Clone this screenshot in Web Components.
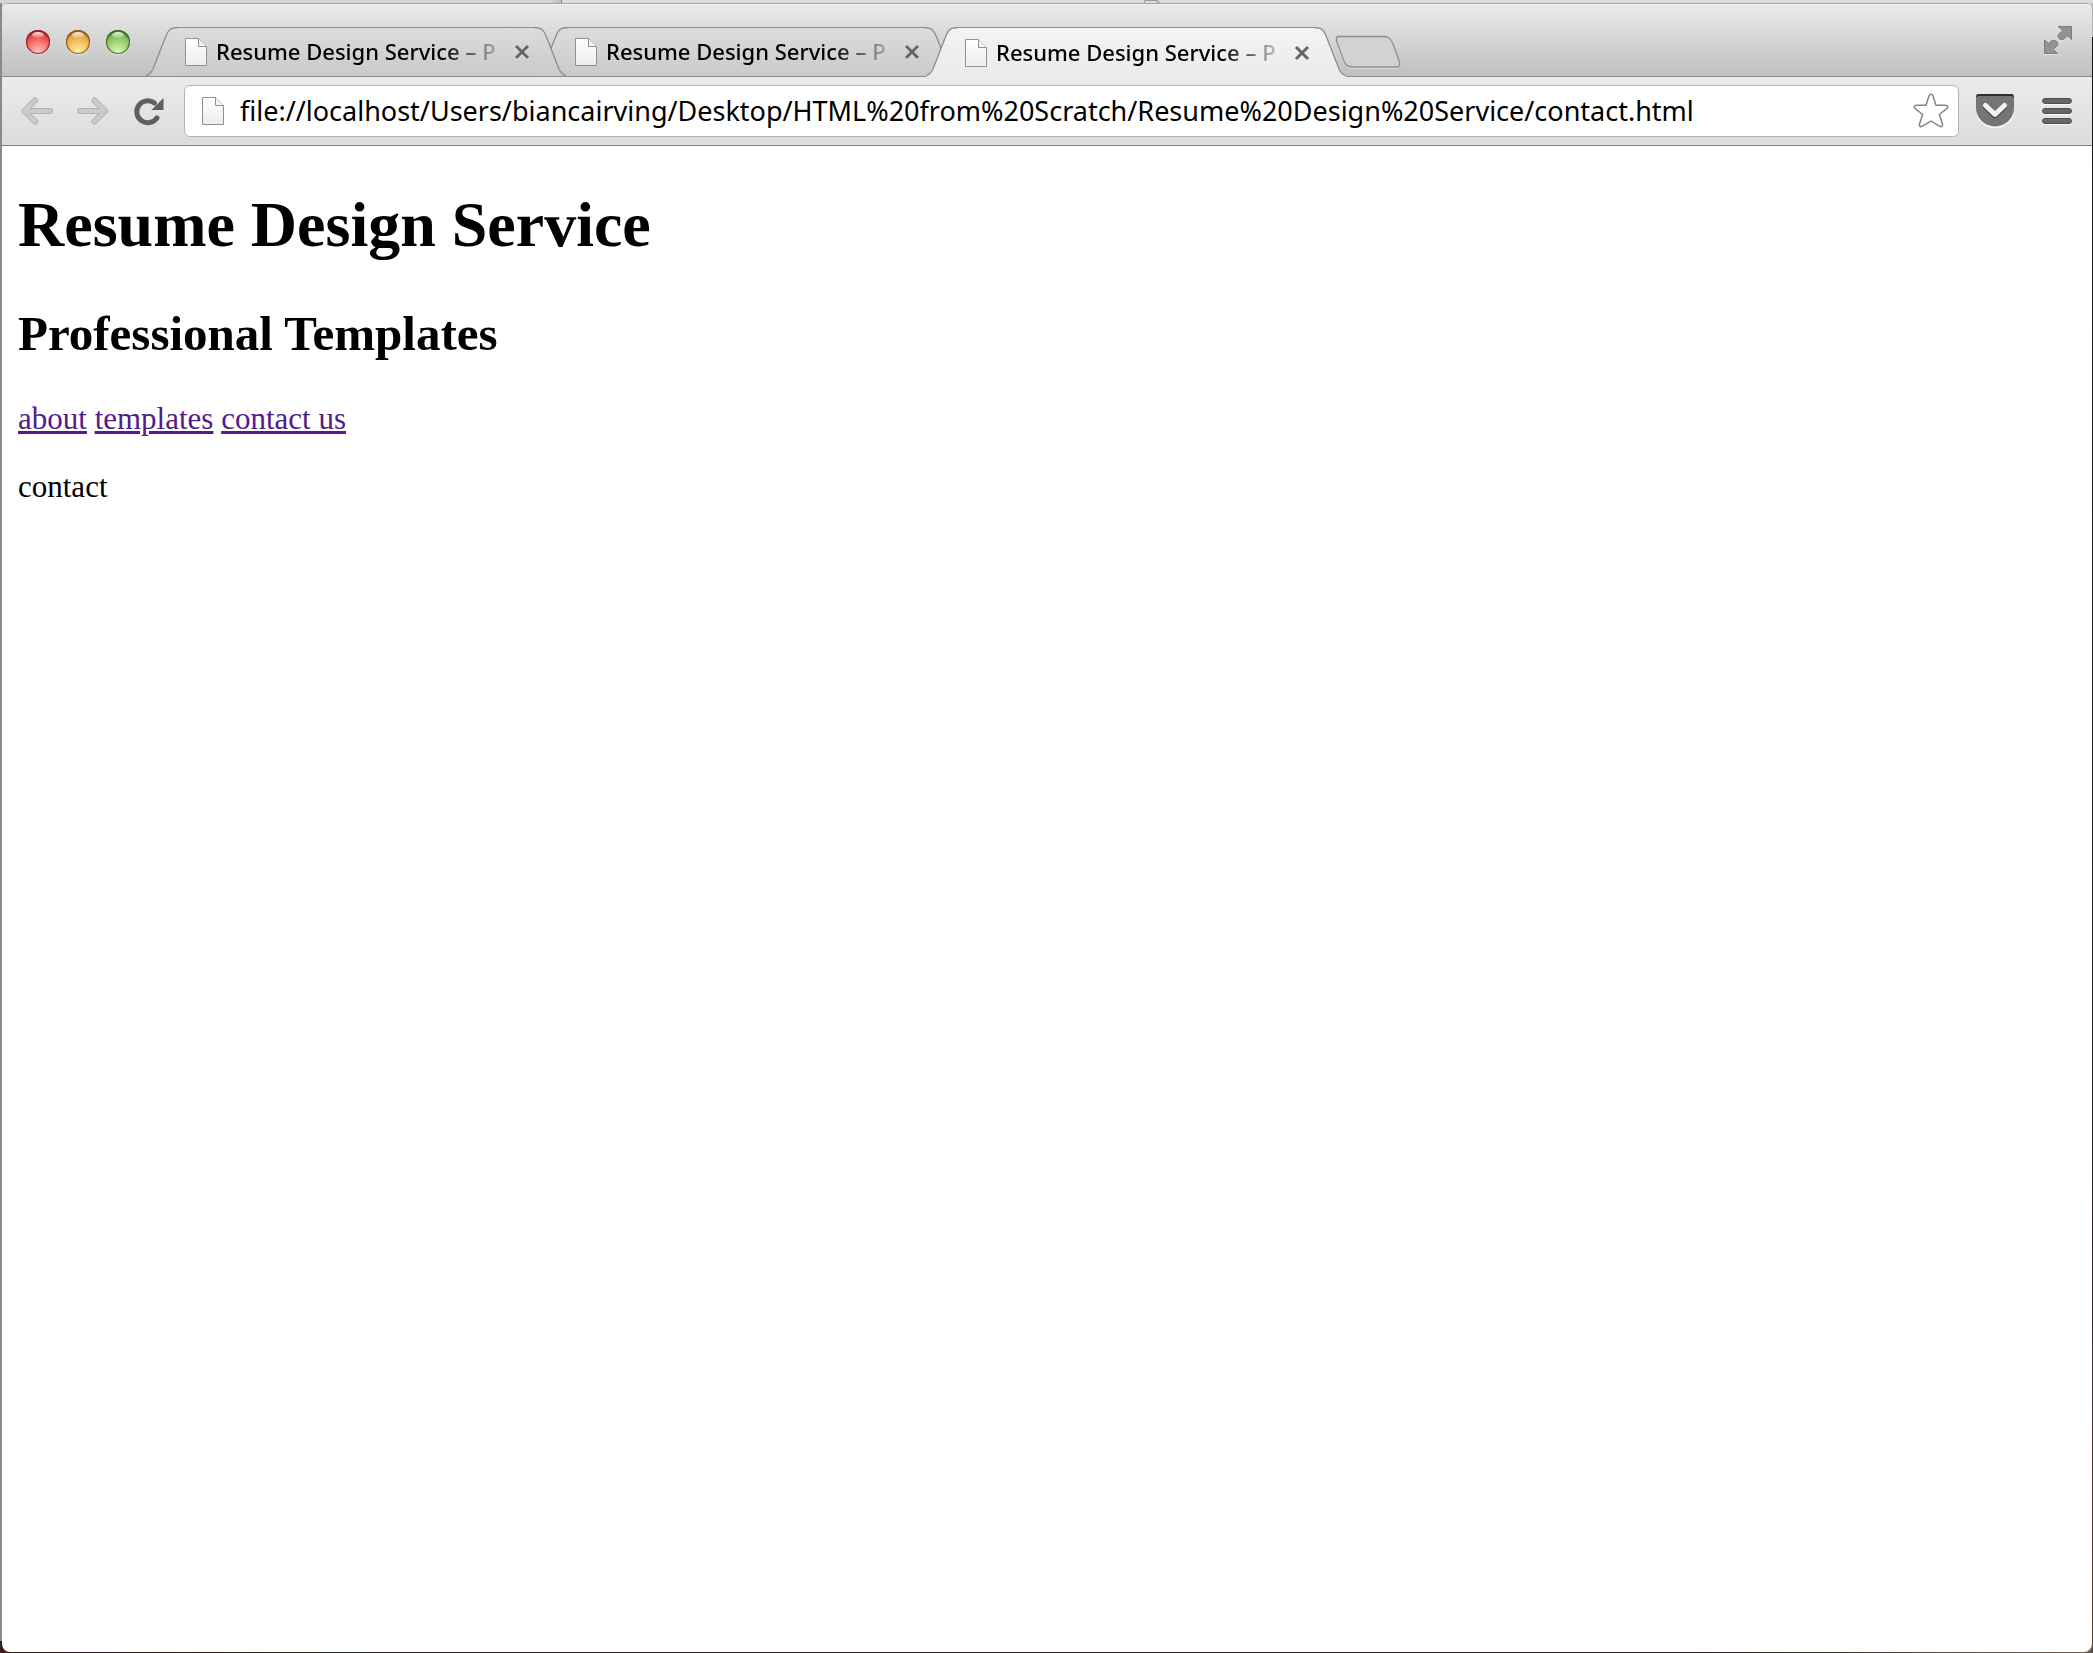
<!DOCTYPE html>
<html lang="en">
<head>
<meta charset="utf-8">
<title>Resume Design Service – Professional Templates</title>
<style>
    html {
        height: 100%;
    }

    body {
        margin: 0;
        min-height: 100%;
        display: flex;
        font-family: "Noto Sans", sans-serif;
        background: #3a2320;
    }
</style>
</head>
<body>
<browser-window>
    <tab-strip slot="tabs">
        <browser-tab style="z-index: 2">Resume Design Service – P</browser-tab>
        <browser-tab style="z-index: 1">Resume Design Service – P</browser-tab>
        <browser-tab active style="z-index: 3">Resume Design Service – P</browser-tab>
    </tab-strip>
    <browser-toolbar slot="toolbar" url="file://localhost/Users/biancairving/Desktop/HTML%20from%20Scratch/Resume%20Design%20Service/contact.html"></browser-toolbar>
    <contact-page></contact-page>
</browser-window>

<script>
// Shared base: clones a template string into an open shadow root
class BaseElement extends HTMLElement {
    constructor() {
        super();
        const template = document.createElement('template');
        template.innerHTML = this.constructor.markup;
        this.attachShadow({ mode: 'open' });
        this.shadowRoot.appendChild(template.content.cloneNode(true));
    }
}

class DocIcon extends BaseElement {
    static markup = `
        <style>
            :host {
                display: block;
                flex: none;
                width: 22px;
                height: 30px;
            }

            svg {
                display: block;
            }
        </style>
        <svg width="22" height="30" viewBox="0 0 22 30" aria-hidden="true">
            <defs>
                <linearGradient id="paper" x1="0" y1="0" x2="0" y2="1">
                    <stop offset="0" stop-color="#fff"/>
                    <stop offset="1" stop-color="#ededed"/>
                </linearGradient>
            </defs>
            <path d="M.5 1.5H13.5L21.5 9.500V28.500H.5Z" fill="url(#paper)" stroke="#909090"/>
            <path d="M13.5 1.500V9.500H21.500" fill="#f4f4f4" stroke="#909090"/>
        </svg>
    `;
}

class TrafficLights extends BaseElement {
    static markup = `
        <style>
            :host {
                display: flex;
                gap: 16px;
            }

            button {
                position: relative;
                width: 24px;
                height: 24px;
                padding: 0;
                border: 0;
                border-radius: 50%;
                background: radial-gradient(circle at 50% 95%, var(--glow) 0, var(--base) 65%, var(--edge) 100%);
                box-shadow: inset 0 0 1px 1px var(--edge), inset 0 2px 2px var(--edge), 0 1px 1px hsla(0 0% 100% / 0.5);
            }

            button::after {
                content: "";
                position: absolute;
                top: 2px;
                left: 6px;
                width: 12px;
                height: 6px;
                border-radius: 50%;
                background: linear-gradient(hsla(0 0% 100% / 0.9), hsla(0 0% 100% / 0.1));
            }

            .close { --base: #f04b4b; --glow: #ffc9c4; --edge: #92242a; }
            .minimise { --base: #eba945; --glow: #fff6a0; --edge: #8e5a1e; }
            .zoom { --base: #83bf5c; --glow: #e4fbb8; --edge: #3d6f2c; }
        </style>
        <button class="close" aria-label="Close"></button>
        <button class="minimise" aria-label="Minimise"></button>
        <button class="zoom" aria-label="Zoom"></button>
    `;
}

class BrowserTab extends BaseElement {
    static markup = `
        <style>
            :host {
                --top: #dcdcdd;
                --bottom: #cacacb;
                --line: #8d8d8d;
                position: relative;
                display: flex;
                flex: 0 1 420px;
                min-width: 0;
                height: 49px;
                margin-right: -30px;
            }

            :host([active]) {
                --top: #f3f3f3;
                --bottom: #ebebeb;
                height: 50px;
                margin-bottom: -1px;
            }

            svg {
                display: block;
                flex: none;
            }

            .edge {
                width: 32px;
                height: 100%;
            }

            .edge stop:first-child { stop-color: var(--top); }
            .edge stop:last-child { stop-color: var(--bottom); }
            .edge .line { fill: none; stroke: var(--line); stroke-width: 1.3; }

            .body {
                flex: 1;
                min-width: 0;
                display: flex;
                align-items: center;
                gap: 9px;
                padding-left: 7px;
                border-top: 1px solid var(--line);
                background: linear-gradient(var(--top), var(--bottom));
            }

            .title {
                flex: 1;
                overflow: hidden;
                white-space: nowrap;
                color: #000;
                padding-bottom: 2px;
                font-size: 22px;
                font-weight: 500;
                line-height: 30px;
                mask-image: linear-gradient(to right, black calc(100% - 60px), transparent calc(100% + 10px));
            }

            button {
                display: flex;
                padding: 0;
                border: 0;
                background: none;
            }
        </style>
        <svg class="edge" viewBox="0 0 32 50" preserveAspectRatio="xMidYMin slice" aria-hidden="true">
            <defs>
                <linearGradient id="l" x1="0" y1="0" x2="0" y2="1"><stop offset="0"/><stop offset="1"/></linearGradient>
            </defs>
            <path d="M0 50V48.500C4 48 5.500 45 7 42L19.500 10C22 3.500 24 .5 32 .5V50Z" fill="url(#l)"/>
            <path class="line" d="M0 48.500C4 48 5.500 45 7 42L19.500 10C22 3.500 24 .5 32 .5"/>
        </svg>
        <div class="body">
            <doc-icon></doc-icon>
            <div class="title"><slot></slot></div>
            <button aria-label="Close tab">
                <svg width="24" height="24" viewBox="0 0 24 24" aria-hidden="true">
                    <path d="M6 7L18 19M18 7L6 19" stroke="#fff" stroke-opacity=".6" stroke-width="3"/>
                    <path d="M6 6L18 18M18 6L6 18" stroke="#666" stroke-width="3"/>
                </svg>
            </button>
        </div>
        <svg class="edge" viewBox="0 0 32 50" preserveAspectRatio="xMidYMin slice" aria-hidden="true">
            <defs>
                <linearGradient id="r" x1="0" y1="0" x2="0" y2="1"><stop offset="0"/><stop offset="1"/></linearGradient>
            </defs>
            <path d="M32 50V48.500C28 48 26.500 45 25 42L12.500 10C10 3.500 8 .5 0 .5V50Z" fill="url(#r)"/>
            <path class="line" d="M32 48.500C28 48 26.500 45 25 42L12.500 10C10 3.500 8 .5 0 .5"/>
        </svg>
    `;
}

class TabStrip extends BaseElement {
    static markup = `
        <style>
            :host {
                display: flex;
                align-items: flex-end;
                height: 72px;
                padding: 0 19px 0 24px;
                border-bottom: 1px solid #8a8a8a;
                background: linear-gradient(#eaeaea, #c0c0c0);
                box-shadow: inset 0 1px #f4f4f4;
            }

            traffic-lights {
                align-self: center;
                padding-top: 4px;
            }

            .tabs {
                flex: 1;
                min-width: 0;
                display: flex;
                align-items: flex-end;
                padding-left: 16px;
            }

            .new, .full {
                display: flex;
                padding: 0;
                border: 0;
                background: none;
            }

            .new {
                margin: 0 0 7px 19px;
            }

            .full {
                align-self: center;
            }
        </style>
        <traffic-lights></traffic-lights>
        <div class="tabs">
            <slot></slot>
            <button class="new" aria-label="New tab">
                <svg width="66" height="34" viewBox="0 0 66 34" aria-hidden="true">
                    <path d="M4 2.500H49C54 2.500 56 5 58 10L64.500 28C65 31 64.500 33 62 33H18C12 33 10.500 31 8.500 26L1.500 7C1 4 1.500 2.500 4 2.500Z" fill="none" stroke="#efefef"/>
                    <path d="M4 1.500H49C54 1.500 56 4 58 9L64.500 27C65 30 64.500 32 62 32H18C12 32 10.500 30 8.500 25L1.500 6C1 3 1.500 1.500 4 1.500Z" fill="#d2d2d2" stroke="#8e8e8e" stroke-width="1.3"/>
                </svg>
            </button>
        </div>
        <button class="full" aria-label="Enter full screen">
            <svg width="30" height="30" viewBox="0 0 30 30" aria-hidden="true">
                <g fill="#fff" opacity=".5" transform="translate(0 1)">
                    <path d="M14.500 1H29V15.500L24.500 11.500L20.500 15C17 16.500 13.500 13 15.500 9.500L19 5.500Z"/>
                    <path d="M1 14.500L5.500 18.500L9 15.500C13 13.500 16 17 14.500 20.500L11 24.500L15.500 29H1Z"/>
                </g>
                <g fill="#939393" stroke="#7c7c7c">
                    <path d="M15 1.500H28.500V14.500L24.500 11L20.500 14.500C17 15.500 14 13 15.500 9.500L19.500 5.500Z"/>
                    <path d="M1.500 15L5.500 18.500L9 15.500C13 14.500 15.500 17 14.500 20.500L10.500 24.500L14.500 28.500H1.500Z"/>
                </g>
            </svg>
        </button>
    `;
}

class BrowserToolbar extends BaseElement {
    static markup = `
        <style>
            :host {
                display: flex;
                align-items: center;
                height: 68px;
                padding: 0 17px 0 18px;
                border-bottom: 1px solid #7f7f7f;
                background: linear-gradient(#ebebeb, #dcdcdc);
            }

            button {
                display: flex;
                flex: none;
                padding: 0;
                border: 0;
                background: none;
            }

            .nav {
                display: flex;
                gap: 20px;
                width: 164px;
            }

            form {
                flex: 1;
                min-width: 0;
                display: flex;
                align-items: center;
                gap: 16px;
                height: 50px;
                padding: 0 7px 0 17px;
                border: 1px solid #b4b4b4;
                border-radius: 6px;
                background: #fff;
            }

            input {
                flex: 1;
                min-width: 0;
                height: 38px;
                padding: 0 0 2px;
                border: 0;
                outline: 0;
                background: none;
                color: #000;
                font-family: "Noto Sans", sans-serif;
                font-size: 27px;
            }

            form button {
                margin-left: -16px;
            }

            .tools {
                display: flex;
                gap: 24px;
                padding-left: 16px;
            }
        </style>
        <div class="nav">
            <button aria-label="Back">
                <svg width="36" height="32" viewBox="0 0 36 32" aria-hidden="true">
                    <g fill="none" stroke-linecap="round" stroke-linejoin="round">
                        <path d="M15 5.500L4.500 16L15 26.500M5 16H30" stroke="#b2b2b2" stroke-width="6"/>
                        <path d="M15 5.500L4.500 16L15 26.500M5 16H30" stroke="#cbcbcb" stroke-width="4"/>
                    </g>
                </svg>
            </button>
            <button aria-label="Forward">
                <svg width="36" height="32" viewBox="0 0 36 32" aria-hidden="true">
                    <g fill="none" stroke-linecap="round" stroke-linejoin="round">
                        <path d="M18.500 5.500L29 16L18.500 26.500M4 16H28.500" stroke="#b2b2b2" stroke-width="6"/>
                        <path d="M18.500 5.500L29 16L18.500 26.500M4 16H28.500" stroke="#cbcbcb" stroke-width="4"/>
                    </g>
                </svg>
            </button>
            <button aria-label="Reload">
                <svg width="36" height="32" viewBox="0 0 36 32" aria-hidden="true">
                    <path d="M25 22.800A11 11 0 1 1 22.500 8" fill="none" stroke="#5f5f5f" stroke-width="5" stroke-linecap="round"/>
                    <path d="M31.500 3V15H19.500Z" fill="#5f5f5f"/>
                </svg>
            </button>
        </div>
        <form>
            <doc-icon></doc-icon>
            <input type="text" aria-label="Address" spellcheck="false">
            <button type="button" aria-label="Bookmark this page">
                <svg width="40" height="40" viewBox="0 0 40 40" aria-hidden="true">
                    <path d="M18 5C19 2.800 21 2.800 22 5L25 14.200H34.500C37 14.400 37.600 16.200 35.800 17.600L28.300 23.500L31.500 33C32 35.500 30.500 36.500 28.500 35.200L20 30.200L11.500 35.200C9.500 36.500 8 35.500 8.500 33L11.700 23.500L4.200 17.600C2.400 16.200 3 14.400 5.500 14.200H15Z" fill="#fff" stroke="#858585" stroke-width="1.500" stroke-linejoin="round"/>
                </svg>
            </button>
        </form>
        <div class="tools">
            <button aria-label="Save to Pocket">
                <svg width="40" height="40" viewBox="0 0 40 40" aria-hidden="true">
                    <path d="M1 8C1 6 2 5 4 5H36C38 5 39 6 39 8V19A19 18 0 0 1 1 19Z" fill="#fafafa"/>
                    <path d="M1 6C1 4 2 3 4 3H36C38 3 39 4 39 6V17A19 18.500 0 0 1 1 17Z" fill="#757575"/>
                    <path d="M1 7V6C1 4 2 3 4 3H36C38 3 39 4 39 6V7C39 6 38 5 36 5H4C2 5 1 6 1 7Z" fill="#2f2f2f"/>
                    <path d="M10.500 16L20 25L29.500 16" fill="none" stroke="#404040" stroke-width="5" stroke-linecap="round" stroke-linejoin="round"/>
                    <path d="M10.500 14.500L20 23.500L29.500 14.500" fill="none" stroke="#f5f5f5" stroke-width="5" stroke-linecap="round" stroke-linejoin="round"/>
                </svg>
            </button>
            <button aria-label="Menu">
                <svg width="36" height="40" viewBox="0 0 36 40" aria-hidden="true">
                    <g fill="#fff" opacity=".8">
                        <rect x="3" y="8" width="30" height="6" rx="3"/>
                        <rect x="3" y="18" width="30" height="6" rx="3"/>
                        <rect x="3" y="28" width="30" height="6" rx="3"/>
                    </g>
                    <g fill="#676767" stroke="#505050">
                        <rect x="3.500" y="7.500" width="29" height="5" rx="2.500"/>
                        <rect x="3.500" y="17.500" width="29" height="5" rx="2.500"/>
                        <rect x="3.500" y="27.500" width="29" height="5" rx="2.500"/>
                    </g>
                </svg>
            </button>
        </div>
    `;

    connectedCallback() {
        this.shadowRoot.querySelector('input').value = this.getAttribute('url') || '';
    }
}

class ContactPage extends BaseElement {
    static markup = `
        <style>
            :host {
                display: block;
                padding: 0 16px;
                font-family: "Liberation Serif", serif;
                color: #000;
            }

            h1 {
                margin: 42px 0 44px;
                font-size: 64px;
                line-height: 74px;
            }

            h2 {
                margin: 40px 0;
                font-size: 49px;
                line-height: 55px;
            }

            nav, p {
                margin: 32px 0;
                font-size: 31px;
                line-height: 36px;
            }

            a {
                color: #551a8b;
            }
        </style>
        <h1>Resume Design Service</h1>
        <h2>Professional Templates</h2>
        <nav><a href="#about">about</a> <a href="#templates">templates</a> <a href="#contact">contact us</a></nav>
        <p>contact</p>
    `;
}

class BrowserWindow extends BaseElement {
    static markup = `
        <style>
            :host {
                flex: 1;
                min-width: 0;
                display: flex;
                flex-direction: column;
                background:
                    linear-gradient(#8a8a8a, #8a8a8a) 0 0 / 2px calc(100% - 12px) no-repeat,
                    linear-gradient(#b0b0b0 37px, #161616 37px, #2b2321 70%, #50443c) 100% 0 / 1px 100% no-repeat,
                    linear-gradient(#d8d8d8, #d8d8d8) 0 0 / 100% 12px no-repeat,
                    linear-gradient(to right, #3a1d1a, #2b2527 20%, #2b2527 80%, #6b5a4c);
            }

            /* sliver of the window that sits behind this one */
            .behind {
                display: flex;
                height: 3px;
                background: linear-gradient(to right, #d4d4d4 550px, #bcbcbc 561px, #8c8c8c 561px, #8c8c8c 562px, #dcdcdc 562px);
            }

            .behind svg {
                margin-left: 1144px;
            }

            .frame {
                flex: 1;
                display: flex;
                flex-direction: column;
                margin: 0 1px 1px 2px;
                border-top: 1px solid #a3a3a3;
                border-radius: 6px 6px 8px 8px;
                overflow: hidden;
                background: #fff;
            }
        </style>
        <div class="behind">
            <svg width="20" height="3" viewBox="0 0 20 3" aria-hidden="true">
                <path d="M.5 3V.5H13L16 3M13 .5V3" fill="none" stroke="#999"/>
            </svg>
        </div>
        <div class="frame">
            <slot name="tabs"></slot>
            <slot name="toolbar"></slot>
            <slot></slot>
        </div>
    `;
}

customElements.define('doc-icon', DocIcon);
customElements.define('traffic-lights', TrafficLights);
customElements.define('browser-tab', BrowserTab);
customElements.define('tab-strip', TabStrip);
customElements.define('browser-toolbar', BrowserToolbar);
customElements.define('contact-page', ContactPage);
customElements.define('browser-window', BrowserWindow);
</script>
</body>
</html>
